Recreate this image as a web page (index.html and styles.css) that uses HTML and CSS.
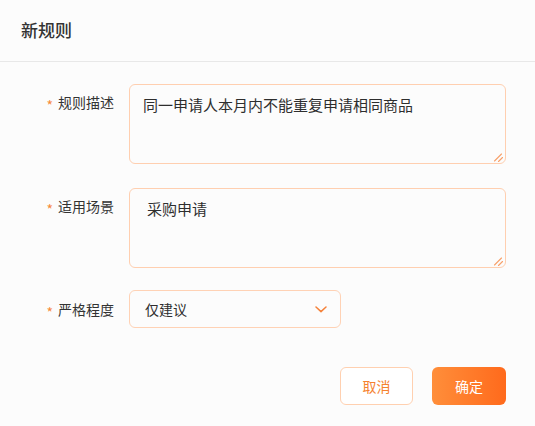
FILE: index.html
```html
<!DOCTYPE html>
<html lang="zh-CN">
<head>
<meta charset="utf-8">
<title>新规则</title>
<link rel="stylesheet" href="styles.css">
</head>
<body>
<div class="dialog">
  <header class="dialog-header">
    <h1 class="dialog-title">新规则</h1>
  </header>
  <form class="form">
    <div class="form-row row-desc">
      <label class="form-label"><span class="req">*</span>规则描述</label>
      <div class="textarea-wrap">
        <textarea class="textarea">同一申请人本月内不能重复申请相同商品</textarea>
        <svg class="resize" viewBox="0 0 10 10" width="10" height="10"><path d="M1.5 9 L8.5 2 M5.5 9.5 L9.5 5.5" stroke="#f7a06a" stroke-width="1.1" stroke-linecap="round" fill="none"/></svg>
      </div>
    </div>
    <div class="form-row row-scene">
      <label class="form-label"><span class="req">*</span>适用场景</label>
      <div class="textarea-wrap">
        <textarea class="textarea indent">采购申请</textarea>
        <svg class="resize" viewBox="0 0 10 10" width="10" height="10"><path d="M1.5 9 L8.5 2 M5.5 9.5 L9.5 5.5" stroke="#f7a06a" stroke-width="1.1" stroke-linecap="round" fill="none"/></svg>
      </div>
    </div>
    <div class="form-row row-level">
      <label class="form-label"><span class="req">*</span>严格程度</label>
      <div class="select">
        <span class="select-value">仅建议</span>
        <svg class="chevron" viewBox="0 0 12 7" width="12" height="7"><path d="M1 1 L6 5.6 L11 1" stroke="#f5823a" stroke-width="1.5" fill="none" stroke-linecap="round" stroke-linejoin="round"/></svg>
      </div>
    </div>
    <div class="actions">
      <button type="button" class="btn btn-cancel">取消</button>
      <button type="button" class="btn btn-ok">确定</button>
    </div>
  </form>
</div>
</body>
</html>
```
FILE: styles.css
```css
* { box-sizing: border-box; }
html, body {
  margin: 0;
  background: #fcfcfc;
  font-family: "Noto Sans CJK SC", "Noto Sans", sans-serif;
  color: #333;
}
.dialog { width: 535px; }
.dialog-header {
  height: 62px;
  border-bottom: 1px solid #e8e8e8;
  display: flex;
  align-items: center;
  padding: 0 0 1px 21px;
}
.dialog-title {
  margin: 0;
  font-size: 17px;
  font-weight: 500;
  color: #333;
  line-height: 24px;
}
.form {
  padding: 22px 29px 0 0;
}
.form-row {
  display: flex;
  align-items: flex-start;
}
.row-desc { margin-bottom: 24px; }
.row-scene { margin-bottom: 22px; }
.row-level { align-items: center; }
.form-label {
  width: 129px;
  flex: none;
  padding-right: 15px;
  text-align: right;
  font-size: 14px;
  line-height: 36px;
  color: #333;
  white-space: nowrap;
}
.req {
  display: inline-block;
  color: #f7893a;
  font-size: 14px;
  margin-right: 5px;
  position: relative;
  top: 3px;
}
.textarea-wrap {
  position: relative;
  flex: 1;
  height: 80px;
}
.textarea {
  display: block;
  width: 100%;
  height: 80px;
  resize: none;
  border: 1px solid #ffcfb0;
  border-radius: 6px;
  background: transparent;
  padding: 10px 13px;
  font-family: inherit;
  font-size: 15px;
  line-height: 20px;
  color: #2e2e2e;
  outline: none;
}
.textarea.indent { padding-left: 17px; }
.resize {
  position: absolute;
  right: 3px;
  bottom: 2px;
}
.select {
  width: 212px;
  height: 38px;
  border: 1px solid #ffd2b5;
  border-radius: 6px;
  display: flex;
  align-items: center;
  justify-content: space-between;
  padding: 0 13px 0 15px;
}
.select-value {
  font-size: 14px;
  color: #2e2e2e;
}
.chevron { display: block; }
.actions {
  display: flex;
  justify-content: flex-end;
  gap: 19px;
  margin-top: 39px;
}
.btn {
  height: 38px;
  border-radius: 6px;
  font-family: inherit;
  font-size: 14px;
  cursor: pointer;
}
.btn-cancel {
  width: 73px;
  background: #fff;
  border: 1px solid #ffd0b0;
  color: #f5822f;
}
.btn-ok {
  width: 74px;
  border: none;
  color: #fff;
  background: linear-gradient(90deg, #ff8e3a, #ff6a1c);
}
```
